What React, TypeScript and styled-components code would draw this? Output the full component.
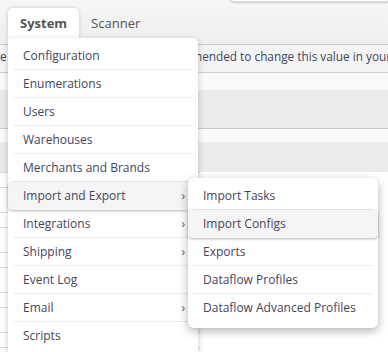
import * as React from "react";
import styled, { createGlobalStyle, css } from "styled-components";

const GlobalStyle = createGlobalStyle`
  html, body {
    margin: 0;
    padding: 0;
    background: #ffffff;
  }
  body {
    font-family: "Open Sans", "DejaVu Sans", sans-serif;
    font-size: 12px;
    color: #45455a;
  }
`;

const Page = styled.div`
  position: relative;
  width: 388px;
  height: 352px;
  overflow: hidden;
  background: #ffffff;
`;

const Header = styled.header`
  height: 44px;
  display: flex;
  justify-content: space-between;
  align-items: flex-start;
  background: linear-gradient(#f7f7f7, #eeeeee);
  border-bottom: 1px solid #cccccc;
`;

const Tabs = styled.nav`
  display: flex;
  align-items: flex-end;
  padding: 8px 0 0 8px;
`;

const Tab = styled.span<{ active?: boolean }>`
  height: 30px;
  line-height: 31px;
  padding: 0 12px;
  color: #555555;
  font-size: 13px;
  ${(props) =>
    props.active &&
    css`
      font-weight: 700;
      background: #ffffff;
      border-radius: 5px 5px 0 0;
      box-shadow: 0 0 4px rgba(0, 0, 0, 0.18);
    `}
`;

const SearchBox = styled.div`
  width: 156px;
  height: 31px;
  margin-top: -31px;
  background: #ffffff;
  border: 1px solid #dddddd;
  border-radius: 0 0 0 4px;
  box-shadow: 0 1px 2px rgba(0, 0, 0, 0.18);
`;

const Notice = styled.div`
  height: 27px;
  line-height: 22px;
  font-size: 11.8px;
  white-space: nowrap;
  overflow: hidden;
  background: #f4f4f4;
  border-bottom: 1px solid #cfcfcf;
  color: #3e4660;
`;

const NoticeText = styled.span<{ offset: number }>`
  display: inline-block;
  margin-left: ${(props) => props.offset}px;
`;

const Band = styled.div<{ height: number; tone: "light" | "grey" }>`
  height: ${(props) => props.height}px;
  background: ${(props) => (props.tone === "grey" ? "#ebebeb" : "#fafafa")};
`;

const Divider = styled.div`
  height: 1px;
  background: #c9c9c9;
`;

const Body = styled.div`
  display: flex;
`;

const LeftColumn = styled.div`
  width: 200px;
  border-top: 1px solid #dddddd;
`;

const RowGroup = styled.div`
  display: flex;
  flex-direction: column;
`;

const RowCell = styled.div<{ tall?: boolean }>`
  height: ${(props) => (props.tall ? 24 : 14)}px;
  border-bottom: 1px solid #dddddd;
`;

const RightColumn = styled.div`
  flex: 1;
  background: #ffffff;
`;

const Menu = styled.ul<{ left: number; top: number; sub?: boolean }>`
  position: absolute;
  left: ${(props) => props.left}px;
  top: ${(props) => props.top}px;
  width: 190px;
  margin: 0;
  padding: 4px 0 ${(props) => (props.sub ? 6 : 3)}px;
  list-style: none;
  background: #ffffff;
  border-radius: ${(props) => (props.sub ? "6px" : "0 5px 0 0")};
  box-shadow: ${(props) =>
    props.sub
      ? "0 3px 10px rgba(0, 0, 0, 0.3)"
      : "0 2px 6px rgba(0, 0, 0, 0.22)"};
  z-index: ${(props) => (props.sub ? 3 : 2)};
`;

const Item = styled.li<{ selected?: boolean }>`
  display: flex;
  align-items: center;
  justify-content: space-between;
  box-sizing: border-box;
  height: 28px;
  margin: 0 5px;
  padding: 0 8px 0 10px;
  border-bottom: 1px solid #ececec;
  color: #45455a;
  font-size: 12px;
  white-space: nowrap;

  &:last-child {
    border-bottom-color: transparent;
  }

  ${(props) =>
    props.selected &&
    css`
      margin: 0;
      padding: 0 13px 0 15px;
      background: #f5f5f5;
      border-radius: 4px;
      border-bottom-color: transparent;
      box-shadow: 0 1px 3px rgba(0, 0, 0, 0.28);
    `}
`;

const Arrow = styled.span`
  font-size: 12px;
  color: #555555;
`;

type Entry = { label: string; sub?: boolean; selected?: boolean };

const mainItems: Entry[] = [
  { label: "Configuration" },
  { label: "Enumerations" },
  { label: "Users" },
  { label: "Warehouses" },
  { label: "Merchants and Brands" },
  { label: "Import and Export", sub: true, selected: true },
  { label: "Integrations", sub: true },
  { label: "Shipping", sub: true },
  { label: "Event Log" },
  { label: "Email", sub: true },
  { label: "Scripts" },
];

const subItems: Entry[] = [
  { label: "Import Tasks" },
  { label: "Import Configs", selected: true },
  { label: "Exports" },
  { label: "Dataflow Profiles" },
  { label: "Dataflow Advanced Profiles" },
];

const MenuList = ({ items, ...props }: { items: Entry[]; left: number; top: number; sub?: boolean }) => (
  <Menu {...props}>
    {items.map((item) => (
      <Item key={item.label} selected={item.selected}>
        {item.label}
        {item.sub && <Arrow>›</Arrow>}
      </Item>
    ))}
  </Menu>
);

export default function App() {
  return (
    <Page>
      <GlobalStyle />
      <Header>
        <Tabs>
          <Tab active>System</Tab>
          <Tab>Scanner</Tab>
        </Tabs>
        <SearchBox />
      </Header>
      <Notice>
        <NoticeText offset={-105}>
          Please configure the Email sender address. It is recommended to change this value in your settings.
        </NoticeText>
      </Notice>
      <Band height={17} tone="light" />
      <Band height={38} tone="grey" />
      <Divider />
      <Band height={13} tone="light" />
      <Band height={30} tone="grey" />
      <Body>
        <LeftColumn>
          {[0, 1, 2, 3, 4].map((n) => (
            <RowGroup key={n}>
              <RowCell />
              <RowCell tall />
            </RowGroup>
          ))}
        </LeftColumn>
        <RightColumn />
      </Body>
      <MenuList items={mainItems} left={8} top={38} />
      <MenuList items={subItems} left={188} top={178} sub />
    </Page>
  );
}
